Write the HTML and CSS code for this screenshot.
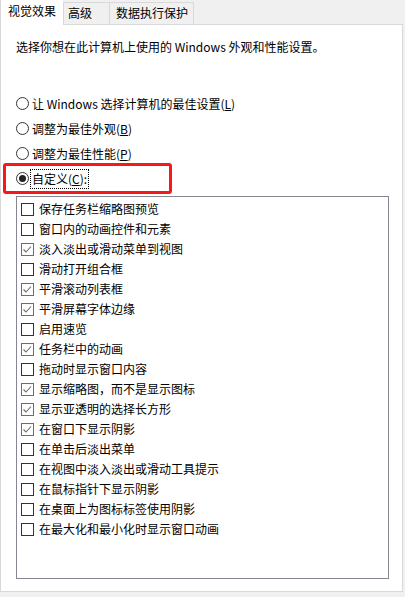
FILE: index.html
```html
<!DOCTYPE html>
<html>
<head>
<meta charset="utf-8">
<link rel="stylesheet" href="styles.css">
</head>
<body>
<div class="tabs">
  <div class="tab active">视觉效果</div>
  <div class="tab tab2">高级</div>
  <div class="tab tab3">数据执行保护</div>
</div>
<div class="panel">
  <div class="desc">选择你想在此计算机上使用的 Windows 外观和性能设置。</div>
  <div class="radios">
    <div class="radio-row"><span class="radio"></span><span class="rlabel">让 Windows 选择计算机的最佳设置(<u>L</u>)</span></div>
    <div class="radio-row"><span class="radio"></span><span class="rlabel">调整为最佳外观(<u>B</u>)</span></div>
    <div class="radio-row"><span class="radio"></span><span class="rlabel">调整为最佳性能(<u>P</u>)</span></div>
    <div class="radio-row"><span class="radio on"></span><span class="rlabel focus">自定义(<u>C</u>):</span></div>
  </div>
  <div class="list">
    <div class="item"><span class="box"></span>保存任务栏缩略图预览</div>
    <div class="item"><span class="box"></span>窗口内的动画控件和元素</div>
    <div class="item"><span class="box checked"><svg viewBox="0 0 13 13" width="13" height="13"><polyline points="2.5,6.5 5,9 10,3.5" /></svg></span>淡入淡出或滑动菜单到视图</div>
    <div class="item"><span class="box"></span>滑动打开组合框</div>
    <div class="item"><span class="box checked"><svg viewBox="0 0 13 13" width="13" height="13"><polyline points="2.5,6.5 5,9 10,3.5" /></svg></span>平滑滚动列表框</div>
    <div class="item"><span class="box checked"><svg viewBox="0 0 13 13" width="13" height="13"><polyline points="2.5,6.5 5,9 10,3.5" /></svg></span>平滑屏幕字体边缘</div>
    <div class="item"><span class="box"></span>启用速览</div>
    <div class="item"><span class="box checked"><svg viewBox="0 0 13 13" width="13" height="13"><polyline points="2.5,6.5 5,9 10,3.5" /></svg></span>任务栏中的动画</div>
    <div class="item"><span class="box"></span>拖动时显示窗口内容</div>
    <div class="item"><span class="box checked"><svg viewBox="0 0 13 13" width="13" height="13"><polyline points="2.5,6.5 5,9 10,3.5" /></svg></span>显示缩略图，而不是显示图标</div>
    <div class="item"><span class="box checked"><svg viewBox="0 0 13 13" width="13" height="13"><polyline points="2.5,6.5 5,9 10,3.5" /></svg></span>显示亚透明的选择长方形</div>
    <div class="item"><span class="box checked"><svg viewBox="0 0 13 13" width="13" height="13"><polyline points="2.5,6.5 5,9 10,3.5" /></svg></span>在窗口下显示阴影</div>
    <div class="item"><span class="box"></span>在单击后淡出菜单</div>
    <div class="item"><span class="box"></span>在视图中淡入淡出或滑动工具提示</div>
    <div class="item"><span class="box"></span>在鼠标指针下显示阴影</div>
    <div class="item"><span class="box"></span>在桌面上为图标标签使用阴影</div>
    <div class="item"><span class="box"></span>在最大化和最小化时显示窗口动画</div>
  </div>
</div>
<div class="highlight"></div>
</body>
</html>
```
FILE: styles.css
```css
html, body {
  margin: 0;
  padding: 0;
}
body {
  background: #f0f0f0;
  width: 405px;
  height: 597px;
  overflow: hidden;
  position: relative;
  font-family: "Noto Sans CJK SC", "Noto Sans", sans-serif;
  font-size: 12px;
  color: #000;
}
.tabs {
  display: flex;
  align-items: flex-end;
  height: 25px;
  position: relative;
  z-index: 2;
}
.tab {
  box-sizing: border-box;
  height: 22px;
  line-height: 20px;
  border: 1px solid #d9d9d9;
  border-bottom: none;
  background: #f0f0f0;
  padding: 0 4px;
}
.tab.active {
  background: #fff;
  height: 25px;
  line-height: 22px;
  width: 63px;
  padding: 0 0 0 7px;
  border-right: none;
  border-top: none;
}
.tab2 {
  width: 47px;
  padding-left: 4px;
  margin-bottom: 1px;
}
.tab3 {
  width: 84px;
  padding-left: 6px;
  border-left: none;
  margin-bottom: 1px;
}
.panel {
  box-sizing: border-box;
  width: 403px;
  height: 568px;
  margin-top: -1px;
  background: #fff;
  border: 1px solid #d9d9d9;
  padding: 14px 0 0 15px;
}
.desc {
  line-height: 16px;
  height: 16px;
}
.radios {
  margin-top: 36px;
}
.radio-row {
  display: flex;
  align-items: center;
  height: 25px;
}
.radio {
  box-sizing: border-box;
  width: 13px;
  height: 13px;
  border: 1px solid #333;
  border-radius: 50%;
  background: #fff;
  display: flex;
  align-items: center;
  justify-content: center;
  margin-right: 3px;
}
.radio.on::after {
  content: "";
  width: 7px;
  height: 7px;
  border-radius: 50%;
  background: #222;
}
.rlabel {
  line-height: 16px;
}
.rlabel.focus {
  outline: 1px dotted #000;
  outline-offset: 1px;
}
.list {
  box-sizing: border-box;
  margin-top: 5px;
  width: 373px;
  height: 383px;
  border: 1px solid #828790;
  padding: 2px 0 0 4px;
}
.item {
  display: flex;
  align-items: center;
  height: 20px;
  line-height: 16px;
}
.box {
  box-sizing: border-box;
  width: 13px;
  height: 13px;
  border: 1px solid #333;
  background: #fff;
  margin-right: 5px;
  flex: none;
  position: relative;
}
.box.checked {
  border-color: #6d6d6d;
}
.box svg {
  position: absolute;
  left: -1px;
  top: -1px;
}
.box polyline {
  fill: none;
  stroke: #6d6d6d;
  stroke-width: 1.1;
}
.highlight {
  position: absolute;
  left: 3px;
  top: 163px;
  width: 169px;
  height: 31px;
  box-sizing: border-box;
  border: 3px solid #f5191c;
  border-radius: 3px;
}
```
